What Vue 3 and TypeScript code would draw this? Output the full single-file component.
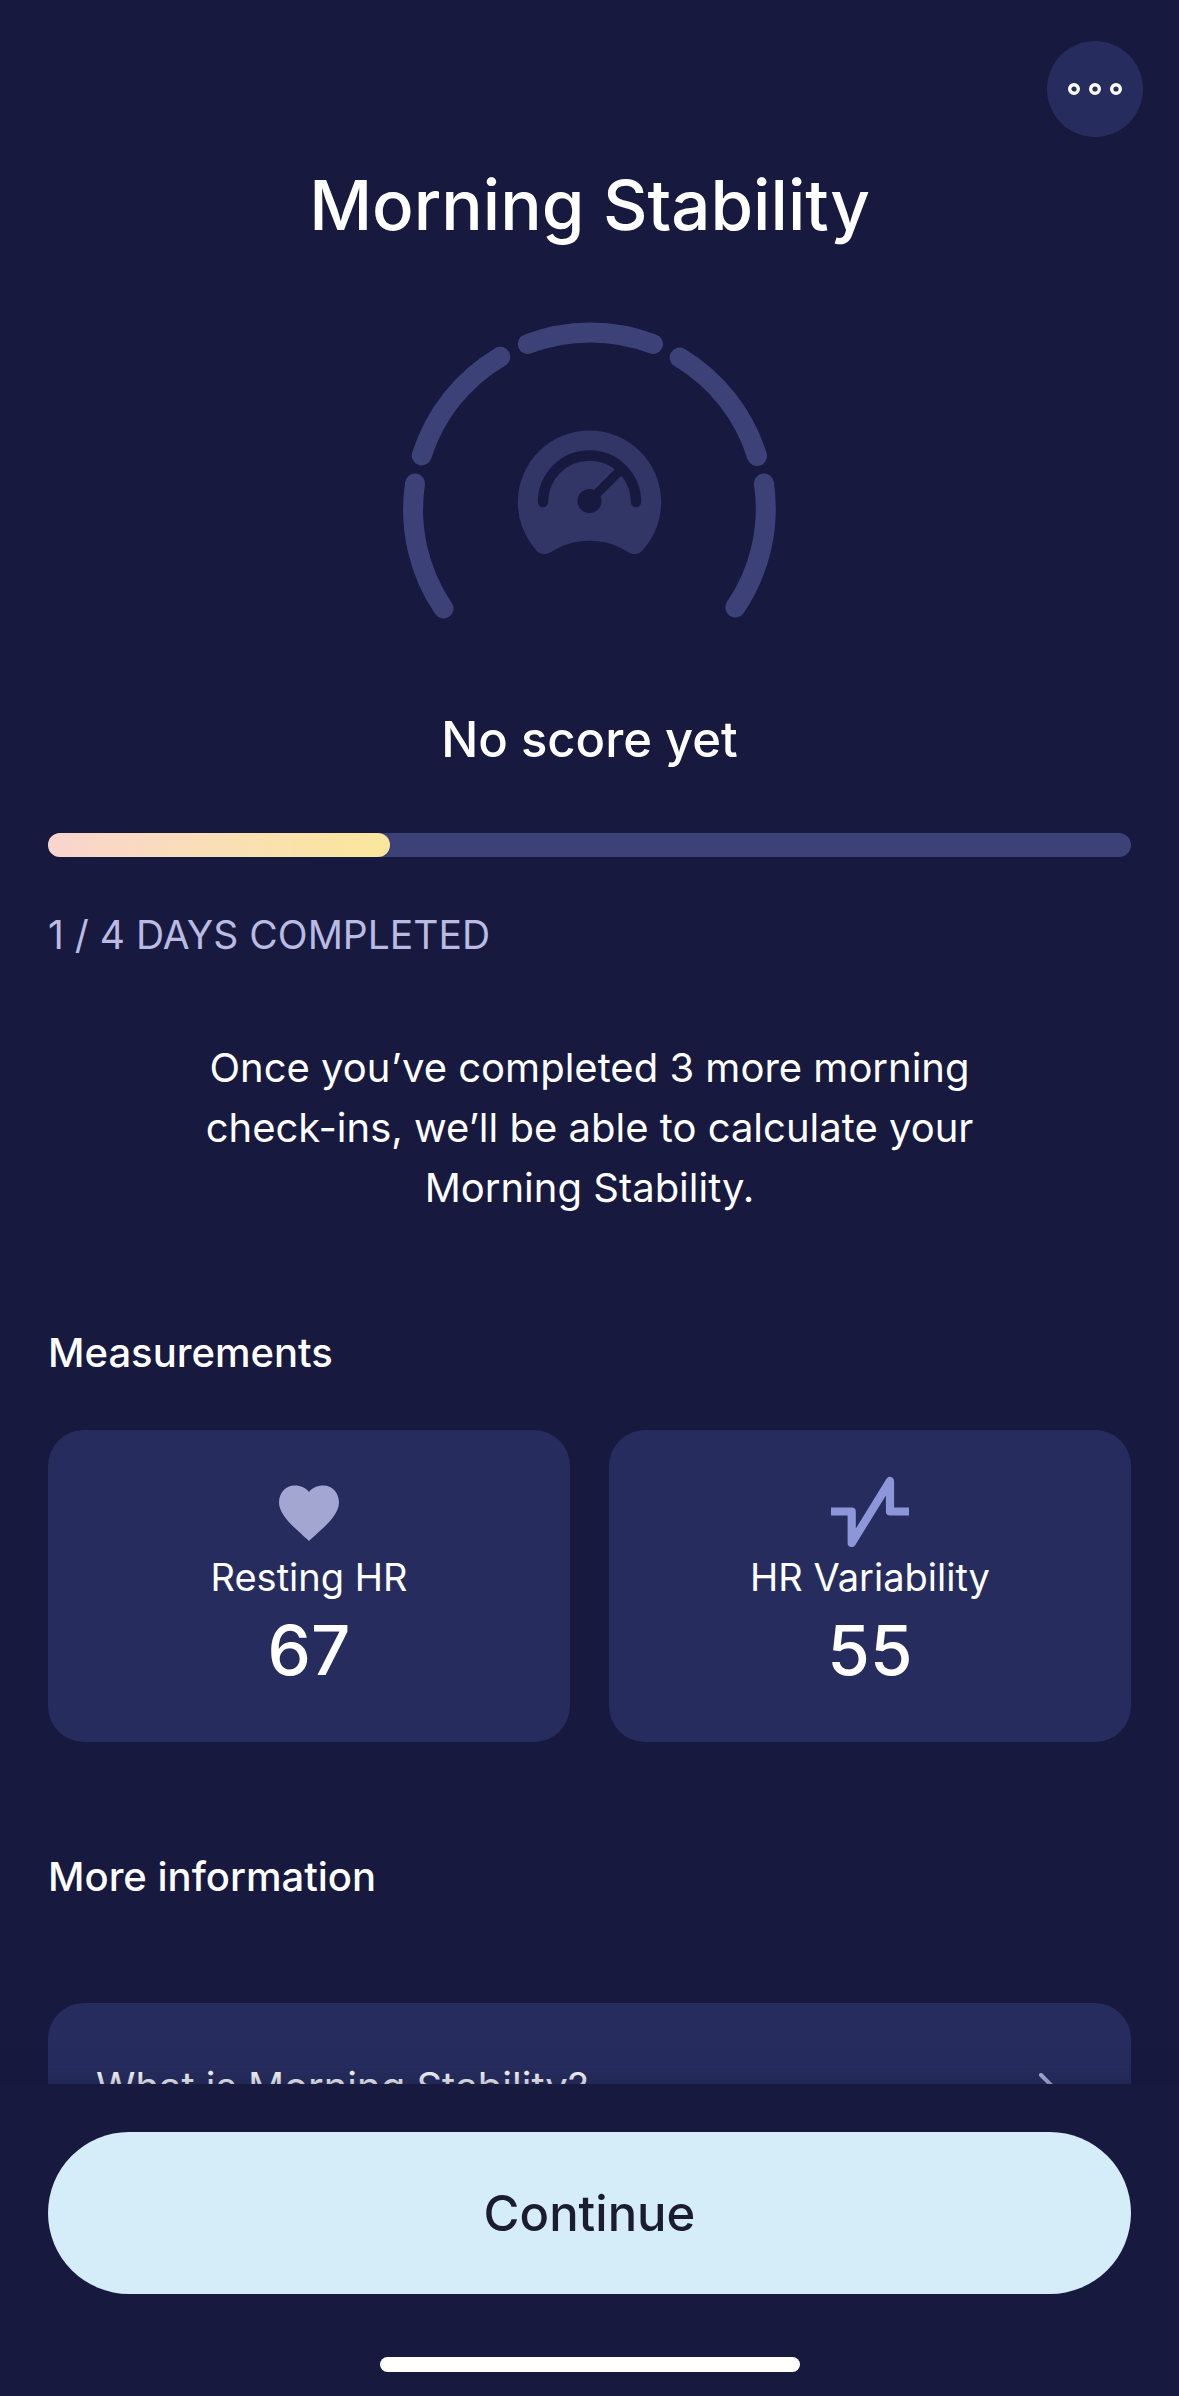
<script setup lang="ts">
interface Measurement {
  id: string
  label: string
  value: number
}

const completedDays = 1
const requiredDays = 4
const progressPercent = 31.6

const measurements: Measurement[] = [
  { id: 'resting', label: 'Resting HR', value: 67 },
  { id: 'variability', label: 'HR Variability', value: 55 },
]

const gaugeSegments: string[] = [
  'M39.5 286.5A176 176 0 0 1 11 161.5',
  'M17.7 133.5A176 176 0 0 1 96.3 34.8',
  'M123.7 22A176 176 0 0 1 249 22',
  'M275.7 35.5A176 176 0 0 1 353 134',
  'M360 161.5A176 176 0 0 1 331.3 285.5',
]
</script>

<template>
  <div class="screen">
    <main class="content">
      <div class="toolbar">
        <button class="more" type="button" aria-label="More options">
          <svg width="54" height="14" viewBox="0 0 54 14" fill="none" stroke="#fff" stroke-width="3.4">
            <circle cx="6" cy="7" r="4.3" />
            <circle cx="27" cy="7" r="4.3" />
            <circle cx="48" cy="7" r="4.3" />
          </svg>
        </button>
      </div>

      <h1>Morning Stability</h1>

      <svg class="gauge" width="374" height="300" viewBox="-1 0 374 300" fill="none" stroke-linecap="round" aria-hidden="true">
        <path v-for="d in gaugeSegments" :key="d" :d="d" stroke="#3c4278" stroke-width="20" />
        <path
          fill="#313667"
          d="M132.5 228.5A71.7 71.7 0 1 1 238.5 228.5C234.5 233 229 233 223.5 229.7C212 222.5 199.5 218.7 185.5 218.7C171.5 218.7 159 222.5 147.5 229.7C142 233 136.5 233 132.5 228.5Z"
        />
        <path d="M139 180A46.5 46.5 0 0 1 232 180" stroke="#17193f" stroke-width="10.4" />
        <path d="M185.5 179L216 148.5" stroke="#17193f" stroke-width="9" />
        <circle cx="185.5" cy="179" r="12" fill="#17193f" />
      </svg>

      <h2 class="status">No score yet</h2>

      <div
        class="track"
        role="progressbar"
        aria-label="Days completed"
        :aria-valuenow="completedDays"
        aria-valuemin="0"
        :aria-valuemax="requiredDays"
      >
        <div class="fill" :style="{ width: progressPercent + '%' }"></div>
      </div>
      <p class="days">{{ completedDays }} / {{ requiredDays }} DAYS COMPLETED</p>

      <p class="note">
        Once you’ve completed {{ requiredDays - completedDays }} more morning check-ins, we’ll be able to calculate your
        Morning Stability.
      </p>

      <h3>Measurements</h3>
      <div class="cards">
        <section v-for="m in measurements" :key="m.id" class="card">
          <svg v-if="m.id === 'resting'" class="icon" width="78" height="72" viewBox="0 0 78 72" aria-hidden="true">
            <path
              fill="#a4a6d2"
              d="M39 65C30 56 9 41 9 26.5C9 16.5 16 9.5 24.5 9.5C31 9.5 36 12 39 16C42 12 47 9.5 53.5 9.5C62 9.5 69 16.5 69 26.5C69 41 48 56 39 65Z"
            />
          </svg>
          <svg v-else class="icon" width="78" height="72" viewBox="0 0 78 72" fill="none" aria-hidden="true">
            <path d="M0 35.5H20.7V67L59 5V35.5H78" stroke="#8e96da" stroke-width="8.2" stroke-linejoin="round" />
          </svg>
          <p class="label">{{ m.label }}</p>
          <p class="value">{{ m.value }}</p>
        </section>
      </div>

      <h3>More information</h3>
      <a class="link-card" href="#stability">
        <span>What is Morning Stability?</span>
        <svg width="16" height="28" viewBox="0 0 16 28" fill="none" aria-hidden="true">
          <path d="M2 2L14 14L2 26" stroke="#b4b6de" stroke-width="4" stroke-linecap="round" stroke-linejoin="round" />
        </svg>
      </a>
    </main>

    <footer>
      <button class="continue" type="button">Continue</button>
      <div class="home-bar"></div>
    </footer>
  </div>
</template>

<style>
body {
  margin: 0;
  background: #17193f;
}
</style>

<style scoped>
.screen {
  display: flex;
  flex-direction: column;
  height: 100vh;
  background: #17193f;
  color: #fff;
  font-family: Inter, 'Liberation Sans', sans-serif;
}

.content {
  flex: 1;
  min-height: 0;
  display: flex;
  flex-direction: column;
  padding: 41px 48px 0;
  overflow-y: auto;
  scrollbar-width: none;
}

.content > * {
  flex-shrink: 0;
}

h1,
h2,
h3,
p {
  margin: 0;
}

.toolbar {
  display: flex;
  justify-content: flex-end;
  margin-right: -12px;
}

.more {
  display: flex;
  align-items: center;
  justify-content: center;
  width: 96px;
  height: 96px;
  padding: 0;
  border: 0;
  border-radius: 50%;
  background: #262d5e;
}

h1 {
  margin-top: 24px;
  font-size: 69px;
  line-height: 88px;
  font-weight: 500;
  text-align: center;
}

.gauge {
  align-self: center;
  margin-top: 73px;
}

.status {
  margin-top: 86px;
  font-size: 49px;
  line-height: 64px;
  font-weight: 500;
  text-align: center;
}

.track {
  height: 24px;
  margin-top: 61px;
  border-radius: 12px;
  background: #3c4278;
}

.fill {
  height: 100%;
  border-radius: 12px;
  background: linear-gradient(90deg, #f9d5cd, #f9dfb6 50%, #fae79c);
}

.days {
  margin-top: 48px;
  font-size: 39px;
  line-height: 60px;
  color: #b9bbe3;
}

.note {
  align-self: center;
  width: 100%;
  max-width: 820px;
  margin-top: 73px;
  font-size: 40px;
  line-height: 60px;
  text-align: center;
}

h3 {
  margin-top: 105px;
  font-size: 40px;
  line-height: 60px;
  font-weight: 500;
}

.cards {
  display: grid;
  grid-template-columns: 1fr 1fr;
  gap: 39px;
  margin-top: 47px;
}

.card {
  display: flex;
  flex-direction: column;
  align-items: center;
  padding: 46px 24px 48px;
  border-radius: 36px;
  background: #262d5e;
}

.label {
  margin-top: 3px;
  font-size: 38px;
  line-height: 52px;
}

.value {
  margin-top: 3px;
  font-size: 69px;
  line-height: 88px;
  font-weight: 500;
}

.link-card {
  display: flex;
  align-items: center;
  justify-content: space-between;
  margin-top: 96px;
  padding: 54px 76px 54px 48px;
  border-radius: 36px;
  background: #262d5e;
  color: #fff;
  font-size: 40px;
  line-height: 60px;
  text-decoration: none;
}

footer {
  display: flex;
  flex-direction: column;
  align-items: center;
  padding: 48px 48px 24px;
  background: #17193f;
  box-shadow: 0 0 24px rgba(23, 25, 63, 0.5);
}

.continue {
  width: 100%;
  height: 162px;
  padding: 0;
  border: 0;
  border-radius: 81px;
  background: #d4edf8;
  color: #1c1c30;
  font-family: inherit;
  font-size: 49px;
  font-weight: 500;
}

.home-bar {
  width: 420px;
  height: 15px;
  margin-top: 63px;
  border-radius: 8px;
  background: #fff;
}
</style>
